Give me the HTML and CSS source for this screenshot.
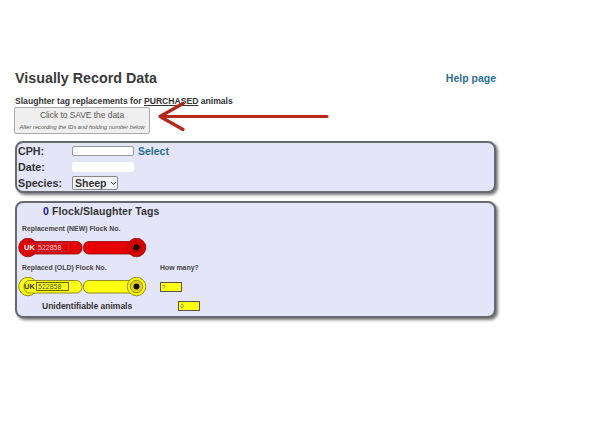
FILE: index.html
```html
<!DOCTYPE html>
<html lang="en">
<head>
<meta charset="utf-8">
<title>Visually Record Data</title>
<link rel="stylesheet" href="styles.css">
</head>
<body>
<main class="page">
  <header class="head">
    <h1>Visually Record Data</h1>
    <a class="help" href="#">Help page</a>
  </header>
  <p class="sub">Slaughter tag replacements for <u>PURCHASED</u> animals</p>
  <button class="save" type="button">
    <span class="save-main">Click to SAVE the data</span>
    <span class="save-note">After recording the IDs and holding number below</span>
  </button>
  <svg class="arrow" width="176" height="36" viewBox="0 0 176 36" aria-hidden="true">
    <path d="M172 16.500H5M28 3.500L5 16.500L28 29.500" fill="none" stroke="#b3281a" stroke-width="3.200" stroke-linecap="round" stroke-linejoin="round"/>
  </svg>

  <section class="panel details">
    <div class="row"><label>CPH:</label><input class="field" type="text"><a class="select" href="#">Select</a></div>
    <div class="row"><label>Date:</label><input class="field plain" type="text"></div>
    <div class="row"><label>Species:</label><span class="species">Sheep<svg width="7" height="5" viewBox="0 0 7 5"><path d="M1 1l2.500 2.500L6 1" fill="none" stroke="#333" stroke-width="1"/></svg></span></div>
  </section>

  <section class="panel tags">
    <h2><span class="count">0</span> Flock/Slaughter Tags</h2>
    <p class="cap">Replacement (NEW) Flock No.</p>
    <div class="tag red">
      <svg width="130" height="20" viewBox="0 0 130 20" aria-hidden="true">
        <circle cx="10" cy="9.500" r="9.300" fill="#e80000" stroke="#8c0808" stroke-width=".8"/>
        <rect x="6" y="3.500" width="58" height="12.500" rx="5.500" fill="#e80000" stroke="#8c0808" stroke-width=".8"/>
        <rect x="65.500" y="3.500" width="56" height="12.500" rx="5.500" fill="#e80000" stroke="#8c0808" stroke-width=".8"/>
        <circle cx="118.500" cy="9.500" r="9.300" fill="#d80000" stroke="#8c0808" stroke-width=".8"/>
        <circle cx="118.500" cy="9.500" r="6" fill="#c40000"/>
        <circle cx="118.500" cy="9.500" r="3" fill="#1a0505"/>
      </svg>
      <b class="uk">UK</b><input class="flock" type="text" value="522858">
    </div>
    <p class="cap second">Replaced (OLD) Flock No.</p>
    <div class="tag-row">
      <div class="tag yellow">
        <svg width="130" height="20" viewBox="0 0 130 20" aria-hidden="true">
          <circle cx="10" cy="9.500" r="9.300" fill="#ffff10" stroke="#77770a" stroke-width=".8"/>
          <rect x="6" y="3.500" width="58" height="12.500" rx="5.500" fill="#ffff10" stroke="#77770a" stroke-width=".8"/>
          <rect x="65.500" y="3.500" width="56" height="12.500" rx="5.500" fill="#ffff10" stroke="#77770a" stroke-width=".8"/>
          <circle cx="118.500" cy="9.500" r="9.300" fill="#ffff10" stroke="#77770a" stroke-width=".8"/>
          <circle cx="118.500" cy="9.500" r="6.200" fill="#e8d020" stroke="#77770a" stroke-width=".8"/>
          <circle cx="118.500" cy="9.500" r="3" fill="#111"/>
        </svg>
        <b class="uk">UK</b><input class="flock" type="text" value="522858">
      </div>
      <div class="many">
        <span class="cap">How many?</span>
        <input class="num" type="text" value="?">
      </div>
    </div>
    <div class="unident"><span>Unidentifiable animals</span><input class="num" type="text" value="0"></div>
  </section>
</main>
</body>
</html>
```
FILE: styles.css
```css
* { box-sizing: border-box; }
html, body { margin: 0; background: #fff; }
body { font-family: "Liberation Sans", Arial, sans-serif; color: #333; }
.page { position: relative; width: 592px; height: 444px; padding: 70px 96px 0 15px; }
.head { display: flex; justify-content: space-between; align-items: center; height: 16px; }
h1 { margin: 0; font-size: 14.300px; font-weight: bold; color: #3a3a3a; }
.help { font-size: 10.500px; font-weight: bold; color: #2a6f92; text-decoration: none; }
.sub { margin: 10px 0 0; font-size: 8.600px; line-height: 10px; font-weight: bold; color: #333; }
.save { display: flex; flex-direction: column; align-items: center; width: 136px; height: 27px; margin: 1px 0 0 -1px; padding: 2px 0 0; background: #efefef; border: 1px solid #aaa; border-radius: 2px; font-family: inherit; color: #555; }
.save-main { font-size: 8.400px; line-height: 11px; }
.save-note { margin-top: 3px; font-size: 5.700px; line-height: 7px; font-style: italic; }
.arrow { position: absolute; left: 155px; top: 100px; }
.panel { background: #e4e5f8; border: 2px solid #666a70; border-radius: 8px; box-shadow: 2px 2px 3px #777; }
.details { height: 52px; margin-top: 7px; padding: 0 0 0 1px; }
.row { display: flex; align-items: center; height: 16px; }
.row label { width: 54px; font-size: 10.700px; font-weight: bold; color: #333; }
.field { width: 62px; height: 10px; padding: 0; border: 1px solid #999; border-radius: 2px; background: #fff; }
.field.plain { border-color: #fff; }
.select { margin-left: 4px; font-size: 10.500px; font-weight: bold; color: #2a6f92; text-decoration: none; }
.species { display: flex; align-items: center; gap: 3px; width: 46px; height: 14px; padding-left: 2px; background: #f4f4f8; border: 1px solid #888; border-radius: 2px; font-size: 10.500px; font-weight: bold; color: #333; }
.tags { height: 117px; margin-top: 8px; padding: 2px 0 0; }
h2 { margin: 0 0 0 26px; font-size: 10.500px; line-height: 12px; font-weight: bold; color: #333; letter-spacing: .1px; }
.count { color: #1a1a80; }
.cap { margin: 0; font-size: 6.900px; line-height: 9px; font-weight: bold; color: #444; }
.tags > .cap { margin: 7px 0 0 5px; }
.tags > .cap.second { margin-top: 6px; }
.tag { position: relative; display: flex; align-items: center; width: 130px; height: 19px; margin: 5px 0 0 1px; }
.tag svg { position: absolute; left: 0; top: 0; }
.tag .uk { position: relative; width: 12px; margin-left: 6px; font-size: 7.500px; color: #fff; }
.tag .flock { position: relative; width: 33px; height: 9px; padding: 0 0 0 1px; font: 7px "Liberation Sans", Arial, sans-serif; border: 1px solid; border-radius: 0; }
.red .flock { color: #ffd8d8; background: #e80000; border-color: #a83030; }
.yellow .uk { color: #333; }
.yellow .flock { color: #555; background: #ffff10; border-color: #66660a; }
.tag-row { display: flex; align-items: flex-start; }
.many { display: flex; flex-direction: column; align-items: flex-start; margin: -9px 0 0 12px; }
.many .num { margin-top: 10px; }
.num { width: 22px; height: 10px; padding: 0 0 0 1px; font: 6px "Liberation Sans", Arial, sans-serif; color: #666; background: #ffff10; border: 1px solid #555; border-radius: 0; }
.unident { display: flex; align-items: center; height: 12px; margin: 4px 0 0 25px; font-size: 8.500px; font-weight: bold; color: #333; }
.unident .num { margin-left: 46px; }
```
